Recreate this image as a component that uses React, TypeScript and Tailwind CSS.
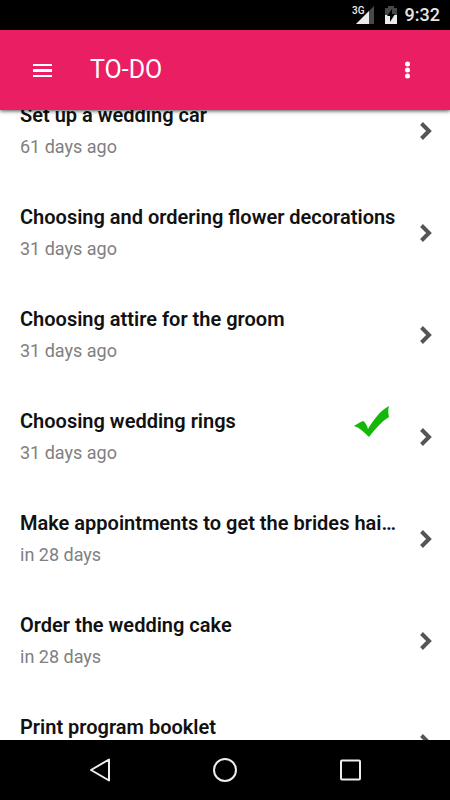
import React from 'react';

interface Task {
  title: string;
  due: string;
  done?: boolean;
}

const tasks: Task[] = [
  { title: 'Set up a wedding car', due: '61 days ago' },
  { title: 'Choosing and ordering flower decorations', due: '31 days ago' },
  { title: 'Choosing attire for the groom', due: '31 days ago' },
  { title: 'Choosing wedding rings', due: '31 days ago', done: true },
  { title: 'Make appointments to get the brides hair done', due: 'in 28 days' },
  { title: 'Order the wedding cake', due: 'in 28 days' },
  { title: 'Print program booklet', due: 'in 28 days' },
];

const StatusBar: React.FC = () => (
  <div className="h-[30px] shrink-0 bg-black flex items-center justify-end pr-2.5 text-[#e6e6e6]">
    {/* Signal */}
    <svg className="w-6 h-5 mr-2.5" viewBox="0 0 24 20" role="img" aria-label="3G signal">
      <path d="M23 1v18H5z" fill="#484848" />
      <path d="M18 6v13H5z" fill="#ececec" />
      <rect width="13" height="10" fill="#000" />
      <text x="1" y="9" fontSize="10" fontWeight="500" fontFamily="Roboto, sans-serif" fill="#ececec">3G</text>
    </svg>
    {/* Battery */}
    <svg className="w-3 h-5 mr-2" viewBox="0 0 12 20" role="img" aria-label="Battery charging">
      <path d="M3 1h6v2h3v7H0V3h3z" fill="#484848" />
      <path d="M0 10h12v9H0z" fill="#ececec" />
      <path d="M7 4v5h3l-5 8v-6H2z" fill="#000" />
    </svg>
    <span className="text-lg leading-6 font-medium">9:32</span>
  </div>
);

const CheckMark: React.FC = () => (
  <svg className="w-9 h-8 shrink-0 mr-2.5" viewBox="0 0 36 32" role="img" aria-label="Done">
    <path
      d="M0 21C3 19 6 17 9 16C11 17 13 20 14 24C20 14 26 6 35 1C34 4 34 8 35 12C27 17 21 24 15 32C10 27 6 23 0 21Z"
      fill="#16b60b"
    />
  </svg>
);

const TaskRow: React.FC<{ task: Task }> = ({ task }) => (
  <li>
    <button className="w-full py-[19px] pl-5 pr-[18px] flex items-center text-left">
      <span className="flex-1 min-w-0 mr-5">
        <span className="flex items-center justify-between">
          <span className="truncate text-xl leading-8 font-semibold text-[#111]">{task.title}</span>
          {task.done && <CheckMark />}
        </span>
        <span className="block text-lg leading-8 text-[#808080]">{task.due}</span>
      </span>
      <svg className="w-3 h-[18px] shrink-0" viewBox="0 0 12 18" fill="none" stroke="#555" strokeWidth="4" aria-hidden="true">
        <path d="M1.5 1.5L9 9l-7.500 7.500" />
      </svg>
    </button>
  </li>
);

export default function App() {
  return (
    <div className="h-screen flex flex-col bg-white font-['Roboto','Noto_Sans',sans-serif]">
      <StatusBar />

      {/* App bar */}
      <header className="relative z-10 h-20 shrink-0 bg-[#e91e63] text-white flex items-center pl-[33px] pr-[38px] shadow-[0_1px_4px_rgba(0,0,0,0.7)]">
        <button aria-label="Open menu">
          <svg className="w-[19px] h-[13px]" viewBox="0 0 19 13" fill="currentColor">
            <path d="M0 0h19v2H0zM0 5h19v3H0zM0 11h19v2H0z" />
          </svg>
        </button>
        <h1 className="flex-1 ml-[38px] text-[25px] leading-8">TO-DO</h1>
        <button aria-label="More options">
          <svg className="w-[9px] h-[18px]" viewBox="0 0 9 18" fill="currentColor">
            <circle cx="4.500" cy="3" r="2.500" />
            <circle cx="4.500" cy="9" r="2.500" />
            <circle cx="4.500" cy="15" r="2.500" />
          </svg>
        </button>
      </header>

      {/* Task list, scrolled part way into the first row */}
      <main className="flex-1 min-h-0 overflow-hidden">
        <ul className="-mt-[30px]">
          {tasks.map((task) => (
            <TaskRow key={task.title} task={task} />
          ))}
        </ul>
      </main>

      {/* Navigation bar */}
      <nav className="h-[60px] shrink-0 bg-black px-[37px] flex items-center justify-between">
        <button aria-label="Back" className="w-[125px] flex justify-center">
          <svg className="w-6 h-6" viewBox="0 0 24 24" fill="none" stroke="#eee" strokeWidth="2" strokeLinejoin="round">
            <path d="M21 1.500v21L3 12z" />
          </svg>
        </button>
        <button aria-label="Home" className="w-[125px] flex justify-center">
          <svg className="w-6 h-6" viewBox="0 0 24 24" fill="none" stroke="#eee" strokeWidth="2">
            <circle cx="12" cy="12" r="11" />
          </svg>
        </button>
        <button aria-label="Recent apps" className="w-[125px] flex justify-center">
          <svg className="w-6 h-6" viewBox="0 0 24 24" fill="none" stroke="#eee" strokeWidth="2">
            <rect x="2" y="2.500" width="19" height="19" rx="1" />
          </svg>
        </button>
      </nav>
    </div>
  );
}
